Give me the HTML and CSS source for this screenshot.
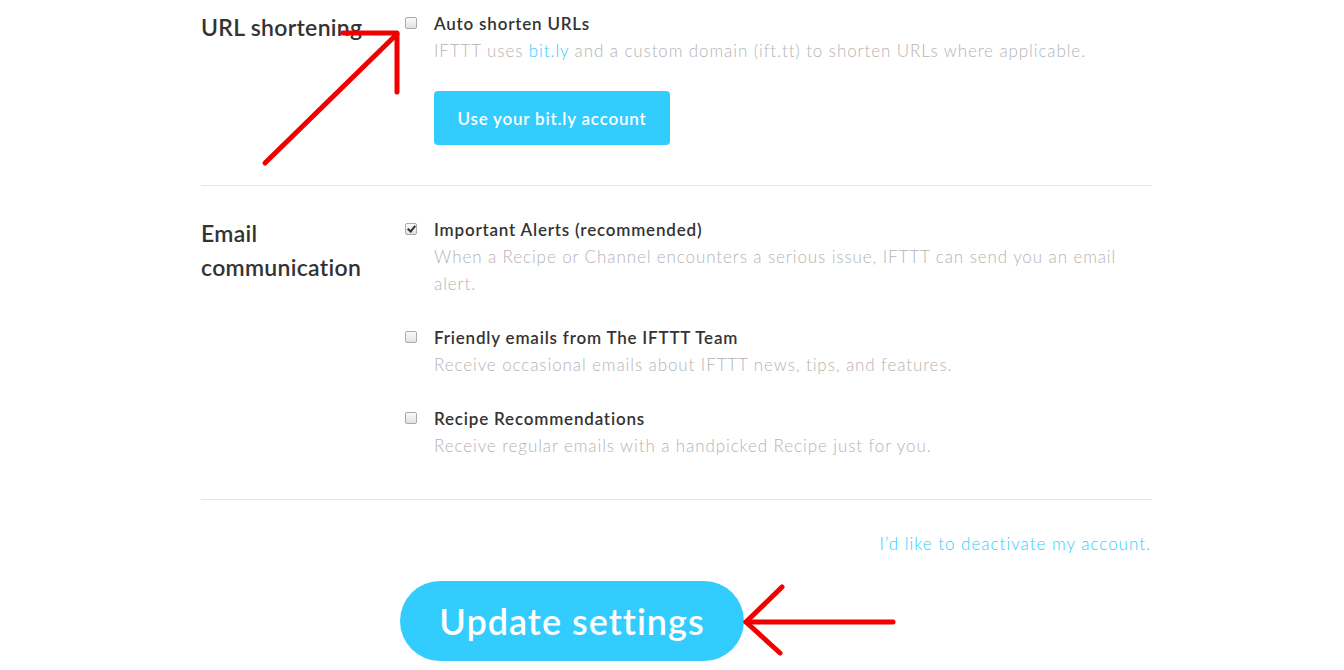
FILE: index.html
```html
<!DOCTYPE html>
<html lang="en">
<head>
<meta charset="utf-8">
<title>Settings</title>
<link rel="stylesheet" href="styles.css">
</head>
<body>
<main class="page">
  <section class="setting setting--first">
    <h2 class="setting__title">URL shortening</h2>
    <div class="setting__options">
      <div class="option">
        <span class="check"></span>
        <div class="option__body">
          <div class="option__label">Auto shorten URLs</div>
          <p class="option__desc">IFTTT uses <a class="link" href="#">bit.ly</a> and a custom domain (ift.tt) to shorten URLs where applicable.</p>
          <button class="btn">Use your bit.ly account</button>
        </div>
      </div>
    </div>
  </section>

  <section class="setting">
    <h2 class="setting__title">Email communication</h2>
    <div class="setting__options">
      <div class="option">
        <span class="check check--on"></span>
        <div class="option__body">
          <div class="option__label">Important Alerts (recommended)</div>
          <p class="option__desc">When a Recipe or Channel encounters a serious issue, IFTTT can send you an email alert.</p>
        </div>
      </div>
      <div class="option">
        <span class="check"></span>
        <div class="option__body">
          <div class="option__label">Friendly emails from The IFTTT Team</div>
          <p class="option__desc">Receive occasional emails about IFTTT news, tips, and features.</p>
        </div>
      </div>
      <div class="option">
        <span class="check"></span>
        <div class="option__body">
          <div class="option__label">Recipe Recommendations</div>
          <p class="option__desc">Receive regular emails with a handpicked Recipe just for you.</p>
        </div>
      </div>
    </div>
  </section>

  <div class="footer">
    <a class="deactivate" href="#">I’d like to deactivate my account.</a>
    <button class="update">Update settings</button>
  </div>
</main>

<svg class="annotations" width="1344" height="670" viewBox="0 0 1344 670" aria-hidden="true">
  <g fill="none" stroke="#f20000" stroke-width="5" stroke-linecap="round" stroke-linejoin="round">
    <path d="M265 163 L397 34"/>
    <path d="M343 33 L397 33 L397 92"/>
    <path d="M893 622 L746 622"/>
    <path d="M782 587 L746 622 L780 653"/>
  </g>
</svg>
</body>
</html>
```

FILE: styles.css
```css
html, body {
  margin: 0;
  padding: 0;
  background: #ffffff;
}

body {
  font-family: Lato, "Noto Sans", "Liberation Sans", sans-serif;
  color: #333333;
  overflow: hidden;
  height: 670px;
  position: relative;
}

.page {
  width: 951px;
  margin-left: 201px;
}

.setting {
  display: grid;
  grid-template-columns: 204px 1fr;
  padding: 30px 0 40px;
  border-bottom: 1px solid #e6e6e6;
}

.setting--first {
  padding-top: 10px;
}

.setting__title {
  margin: 0;
  font-size: 23px;
  line-height: 34px;
  font-weight: 600;
  color: #333333;
  letter-spacing: 0.3px;
  width: 175px;
}

.setting__options {
  display: flex;
  flex-direction: column;
  gap: 27px;
}

.option {
  display: flex;
  align-items: flex-start;
  gap: 17px;
}

.check {
  flex: none;
  width: 10px;
  height: 10px;
  margin-top: 7px;
  border: 1px solid #a9a9a9;
  border-radius: 2px;
  background: linear-gradient(#fafafa, #e2e2e2);
  position: relative;
}

.check--on::after {
  content: "";
  position: absolute;
  left: 3px;
  top: 0px;
  width: 3px;
  height: 6px;
  border: solid #333333;
  border-width: 0 2px 2px 0;
  transform: rotate(40deg);
}

.option__body {
  flex: 1;
}

.option__label {
  font-size: 17px;
  line-height: 27px;
  font-weight: 600;
  color: #333333;
  letter-spacing: 0.8px;
}

.option__desc {
  margin: 0;
  font-size: 17px;
  line-height: 27px;
  font-weight: 300;
  color: #b4b4b4;
  letter-spacing: 0.9px;
}

.link {
  color: #33ccff;
  text-decoration: none;
}

.btn {
  display: block;
  margin-top: 27px;
  width: 236px;
  height: 54px;
  border: 0;
  border-radius: 4px;
  background: #33ccff;
  color: #ffffff;
  font-family: inherit;
  font-size: 17px;
  font-weight: 600;
  letter-spacing: 0.8px;
  padding: 0;
  cursor: pointer;
}

.footer {
  display: flex;
  flex-direction: column;
  align-items: flex-start;
  padding-top: 30px;
}

.deactivate {
  align-self: flex-end;
  margin-right: 1px;
  font-size: 17px;
  line-height: 27px;
  font-weight: 300;
  color: #33ccff;
  text-decoration: none;
  letter-spacing: 1px;
}

.update {
  margin-top: 24px;
  margin-left: 199px;
  width: 344px;
  height: 80px;
  border: 0;
  border-radius: 40px;
  background: #33ccff;
  color: #ffffff;
  font-family: inherit;
  font-size: 36px;
  font-weight: 600;
  letter-spacing: 1px;
  padding: 0;
  cursor: pointer;
}

.annotations {
  position: absolute;
  left: 0;
  top: 0;
  pointer-events: none;
}
```
